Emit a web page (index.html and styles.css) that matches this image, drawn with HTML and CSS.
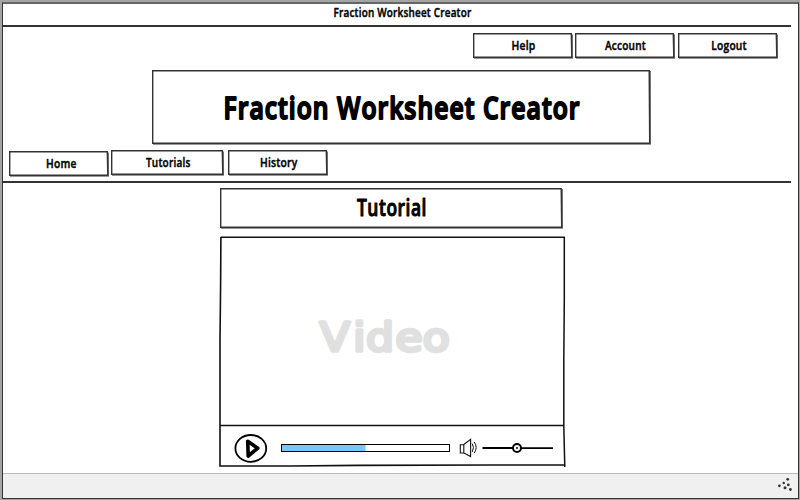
FILE: index.html
```html
<!DOCTYPE html>
<html lang="en">
<head>
<meta charset="utf-8">
<title>Fraction Worksheet Creator</title>
<link rel="stylesheet" href="styles.css">
</head>
<body>
<div class="window">
  <header class="titlebar">
    <svg width="140" height="22" viewBox="332 4 140 22"><text x="333.5" y="17" font-size="12.3" textLength="138" lengthAdjust="spacingAndGlyphs">Fraction Worksheet Creator</text></svg>
  </header>
  <nav class="account">
    <svg class="box" width="101" height="27" viewBox="472 32 101 27"><path class="shade" d="M572 34.5V57.8H474"/><path class="frame" d="M473.7 33.7H571.3L571.8 57.2H473.7Z"/><text x="511.5" y="50" textLength="24" lengthAdjust="spacingAndGlyphs">Help</text></svg>
    <svg class="box" width="101" height="27" viewBox="574 32 101 27"><path class="shade" d="M674 34.5V57.8H576"/><path class="frame" d="M575.7 33.7H673.3L673.8 57.2H575.7Z"/><text x="605" y="50" textLength="41" lengthAdjust="spacingAndGlyphs">Account</text></svg>
    <svg class="box" width="101" height="27" viewBox="677 32 101 27"><path class="shade" d="M777 34.5V57.8H679"/><path class="frame" d="M678.7 33.7H776.3L776.8 57.2H678.7Z"/><text x="711.3" y="50" textLength="35.5" lengthAdjust="spacingAndGlyphs">Logout</text></svg>
  </nav>
  <h1 class="banner">
    <svg class="box" width="501" height="76" viewBox="151 69 501 76"><path class="shade" d="M650 71V143.8H153"/><path class="frame" d="M152.7 70.7H649.2L649.7 143.2H152.7Z"/><text class="heavy" x="223.5" y="118.5" textLength="357" lengthAdjust="spacingAndGlyphs">Fraction Worksheet Creator</text></svg>
  </h1>
  <nav class="tabs">
    <svg class="box low" width="101" height="27" viewBox="8 150 101 27"><path class="shade" d="M108 152.5V175.8H10"/><path class="frame" d="M9.7 151.7H107.3L107.8 175.2H9.7Z"/><text x="46" y="168" textLength="30.5" lengthAdjust="spacingAndGlyphs">Home</text></svg>
    <svg class="box" width="115" height="27" viewBox="110 149 115 27"><path class="shade" d="M223 151.5V174.8H112"/><path class="frame" d="M111.7 150.7H222.3L222.8 174.2H111.7Z"/><text x="146" y="167" textLength="44.5" lengthAdjust="spacingAndGlyphs">Tutorials</text></svg>
    <svg class="box" width="101" height="27" viewBox="227 149 101 27"><path class="shade" d="M327 151.5V174.8H229"/><path class="frame" d="M228.7 150.7H326.3L326.8 174.2H228.7Z"/><text x="260" y="167" textLength="37.5" lengthAdjust="spacingAndGlyphs">History</text></svg>
  </nav>
  <main class="content">
    <h2>
      <svg class="box" width="347" height="42" viewBox="219 187 347 42"><path class="shade" d="M562 189V227.8H221"/><path class="frame" d="M220.7 188.7H561.2L561.7 227.2H220.7Z"/><text class="mid" x="357" y="216" textLength="70" lengthAdjust="spacingAndGlyphs">Tutorial</text></svg>
    </h2>
    <section class="player">
      <svg width="347" height="232" viewBox="219 236 347 232">
        <path d="M220.7 237.2H564.3V300L563.8 360V426L564.8 467" fill="none" stroke="#111" stroke-width="1.5"/>
        <path d="M220.9 237L220.6 286L220 340V466H290L358 465.4L494 465H565" fill="none" stroke="#111" stroke-width="1.6"/>
        <path d="M220 425.5H564" stroke="#111" stroke-width="1.4"/>
        <text class="video" transform="scale(1.13 1)" x="283 312.6 324 350 374.2" y="351">Video</text>
        <ellipse cx="250.8" cy="448.4" rx="15.4" ry="13.4" fill="#fff" stroke="#000" stroke-width="1.8"/>
        <path d="M247.7 441.2L257.8 448.2L248.2 456Z" fill="#fff" stroke="#000" stroke-width="3.6" stroke-linejoin="round"/>
        <rect x="281.5" y="444.5" width="168" height="7" fill="#fff"/>
        <rect x="281" y="444.5" width="84.5" height="7" fill="#7ac8fa"/>
        <rect x="281.5" y="444.5" width="168" height="7" fill="none" stroke="#000"/>
        <g fill="#fff" stroke="#111" stroke-width="1.1">
          <path d="M460.3 444.7H463.8V453H460.3ZM463.8 444.5L470.6 439.3V456.5L463.8 453Z"/>
          <path d="M472.1 443.5Q474.8 447.5 472.2 452M474.2 442Q478.2 447.5 474.2 453" fill="none" stroke-width="1"/>
        </g>
        <path d="M482.5 448H513M521 448.2H553" stroke="#000" stroke-width="1.8"/>
        <circle cx="517" cy="448" r="4" fill="#fff" stroke="#000" stroke-width="2"/>
        <circle cx="517" cy="448" r="1" fill="#000"/>
      </svg>
    </section>
  </main>
  <footer class="status">
    <svg width="14" height="14" viewBox="777.5 477 14 14" fill="#333"><circle cx="787.2" cy="479.3" r="1.4"/><circle cx="783.2" cy="483" r="1.2"/><circle cx="778.9" cy="485.8" r="1.4"/><circle cx="787.8" cy="484.8" r="1.4"/><circle cx="784.5" cy="487.8" r="1.5"/><circle cx="789.9" cy="489.5" r="1.4"/></svg>
  </footer>
</div>
</body>
</html>
```
FILE: styles.css
```css
* { box-sizing: border-box; }
body {
  margin: 0;
  height: 500px;
  overflow: hidden;
  padding: 2px 1px 1px 2px;
  background: #a5a5a5;
}
.window {
  width: 797px;
  height: 497px;
  display: flex;
  flex-direction: column;
  background: #fff;
  border: 1px solid #333;
  border-top: 2px solid #666;
}
svg { display: block; flex: none; overflow: visible; }
text {
  font-family: "Open Sans", "Noto Sans", sans-serif;
  font-weight: 600;
  letter-spacing: .25px;
  fill: #000;
  stroke: #000;
  stroke-width: .45px;
  stroke-linejoin: round;
}
.box text { font-size: 12.7px; }
.box text.heavy { font-size: 31.5px; stroke-width: 2px; letter-spacing: 1.3px; }
.box text.mid { font-size: 22.5px; stroke-width: 1px; letter-spacing: .7px; }
.box .frame { fill: #fff; stroke: #333; stroke-width: 1.4px; }
.box .shade { fill: none; stroke: #777; stroke-width: 2px; }
.titlebar {
  width: 788px;
  height: 23px;
  padding-left: 329px;
  border-bottom: 2px solid #333;
}
.account { display: flex; gap: 1px; height: 42px; padding: 5px 0 0 469px; }
.account .box:last-child { margin-left: 1px; }
.banner { height: 80px; margin: 0; padding-left: 148px; }
.tabs {
  display: flex;
  gap: 1px;
  width: 788px;
  height: 34px;
  padding-left: 5px;
  border-bottom: 2px solid #333;
}
.tabs .low { margin-top: 1px; }
.tabs .box:last-child { margin-left: 1px; }
.content { flex: 1; padding: 4px 0 0 216px; }
.content h2 { margin: 0; height: 49px; }
.video {
  font-family: "DejaVu Sans", sans-serif;
  font-size: 39px;
  font-weight: 400;
  letter-spacing: 0;
  fill: #e0e0e0;
  stroke: #e0e0e0;
  stroke-width: 3.4px;
}
.status {
  height: 25px;
  padding: 3px 6px 0 0;
  display: flex;
  justify-content: flex-end;
  background: #f0f0f0;
  border-top: 1px solid #bbb;
}
```
